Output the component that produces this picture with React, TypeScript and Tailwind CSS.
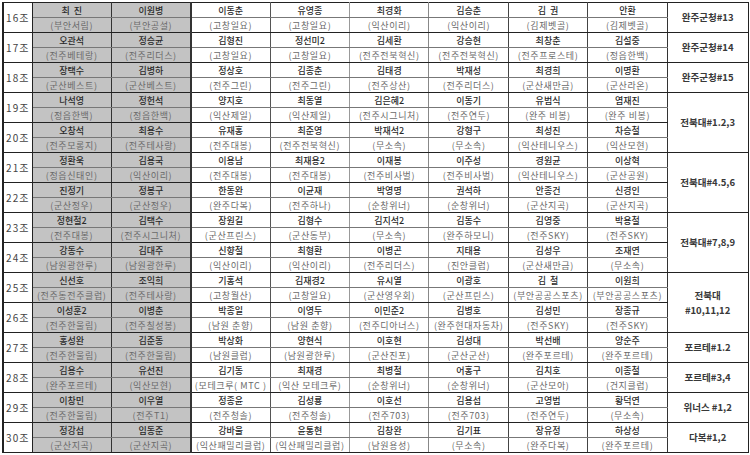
import React from "react";

type Player = [string, string];

interface Jo {
  no: number;
  players: Player[];
}

interface Group {
  start: number;
  span: number;
  label: React.ReactNode;
}

const jos: Jo[] = [
  { no: 16, players: [["최  진", "부안서림"], ["이원병", "부안공설"], ["이동춘", "고창일요"], ["유영종", "고창일요"], ["최경화", "익산이리"], ["김승춘", "익산이리"], ["김  권", "김제벳골"], ["안환", "김제벳골"]] },
  { no: 17, players: [["오관석", "전주베테랑"], ["정승균", "전주리더스"], ["김형진", "고창일요"], ["정선미2", "고창일요"], ["김세환", "전주전북혁신"], ["강승현", "전주전북혁신"], ["최창춘", "전주프로스테"], ["김설중", "정읍한백"]] },
  { no: 18, players: [["장택수", "군산베스트"], ["김병하", "군산베스트"], ["정상호", "전주그린"], ["김종춘", "전주그린"], ["김태경", "전주상산"], ["박재성", "전주리더스"], ["최경희", "군산새만금"], ["이명환", "군산라온"]] },
  { no: 19, players: [["나석영", "정읍한백"], ["정헌석", "정읍한백"], ["양지호", "익산제일"], ["최동열", "익산제일"], ["김은혜2", "전주시그니처"], ["이동기", "전주연두"], ["유범식", "완주 비봉"], ["염재진", "완주 비봉"]] },
  { no: 20, players: [["오창석", "전주모롱지"], ["최용수", "전주테사랑"], ["유재홍", "전주대봉"], ["최준영", "전주전북혁신"], ["박재석2", "무소속"], ["강형구", "무소속"], ["최성진", "익산테니우스"], ["차승철", "익산모현"]] },
  { no: 21, players: [["정환욱", "정읍신태인"], ["김용국", "익산이리"], ["이용남", "전주대봉"], ["최재용2", "전주대봉"], ["이재봉", "전주비사벌"], ["이주성", "전주비사벌"], ["경원균", "익산테니우스"], ["이상혁", "군산공원"]] },
  { no: 22, players: [["진정기", "군산정우"], ["정봉구", "군산정우"], ["한동완", "완주다복"], ["이균재", "전주하나"], ["박영명", "순창위너"], ["권석하", "순창위너"], ["안종건", "군산지곡"], ["신경인", "군산지곡"]] },
  { no: 23, players: [["정현철2", "전주대봉"], ["김택수", "전주시그니처"], ["장원길", "군산프린스"], ["김형수", "군산동부"], ["김지석2", "무소속"], ["김동수", "완주하모니"], ["김영중", "전주SKY"], ["박용철", "전주SKY"]] },
  { no: 24, players: [["강동수", "남원광한루"], ["김대주", "남원광한루"], ["신향철", "익산이리"], ["최형환", "익산이리"], ["이병곤", "전주리더스"], ["지태용", "진안클럽"], ["김성우", "군산새만금"], ["조재연", "무소속"]] },
  { no: 25, players: [["신선호", "전주동전주클럽"], ["조익희", "전주테사랑"], ["기홍석", "고창월산"], ["김재경2", "고창일요"], ["유시열", "군산영우회"], ["이광호", "군산프린스"], ["김  철", "부안공공스포츠"], ["이원희", "부안공공스포츠"]] },
  { no: 26, players: [["이성훈2", "전주한울림"], ["이병춘", "전주칠성봉"], ["박종일", "남원 춘향"], ["이영두", "남원 춘향"], ["이민준2", "전주디아너스"], ["김병호", "완주현대자동차"], ["김성민", "전주SKY"], ["장종규", "전주SKY"]] },
  { no: 27, players: [["홍성완", "전주한울림"], ["김준동", "전주한울림"], ["박상화", "남원클럽"], ["양현식", "남원광한루"], ["이호현", "군산진포"], ["김성대", "군산군산"], ["박선배", "완주포르테"], ["양순주", "완주포르테"]] },
  { no: 28, players: [["김용수", "완주포르테"], ["유선진", "익산모현"], ["김기동", "모테크루( MTC "], ["최재경", "익산 모테크루"], ["최병철", "순창위너"], ["어홍구", "순창위너"], ["김치호", "군산모아"], ["이종철", "건지클럽"]] },
  { no: 29, players: [["이창민", "전주한울림"], ["이우열", "전주T1"], ["정종윤", "전주청솔"], ["김성룡", "전주청솔"], ["이호선", "전주703"], ["김용섭", "전주703"], ["고영범", "전주연두"], ["황덕연", "무소속"]] },
  { no: 30, players: [["정강섭", "군산지곡"], ["임동준", "군산지곡"], ["강바울", "익산패밀리클럽"], ["윤통현", "익산패밀리클럽"], ["김창완", "남원용성"], ["김기표", "무소속"], ["장유정", "완주다복"], ["하상성", "완주포르테"]] },
];

const groups: Group[] = [
  { start: 0, span: 1, label: "완주군청#13" },
  { start: 1, span: 1, label: "완주군청#14" },
  { start: 2, span: 1, label: "완주군청#15" },
  { start: 3, span: 2, label: "전북대#1.2,3" },
  { start: 5, span: 2, label: "전북대#4.5,6" },
  { start: 7, span: 2, label: "전북대#7,8,9" },
  { start: 9, span: 2, label: (<>전북대<br />#10,11,12</>) },
  { start: 11, span: 1, label: "포르테#1.2" },
  { start: 12, span: 1, label: "포르테#3,4" },
  { start: 13, span: 1, label: "위너스 #1,2" },
  { start: 14, span: 1, label: "다복#1,2" },
];

// vertical line colour after each player column
const rightLine = [
  "border-r-[#333]",
  "border-r-[#333] border-r-2",
  "border-r-[#555]",
  "border-r-[#999]",
  "border-r-[#888]",
  "border-r-[#444]",
  "border-r-[#444]",
  "border-r-[#333]",
];

//==================================================================================\\

const App: React.FC = () => {
  return (
    <div
      className="w-[750px] h-[455px] overflow-hidden bg-white pt-[2px]"
      style={{ fontFamily: '"Noto Sans CJK KR", "Noto Sans", sans-serif' }}
    >
      <table className="ml-[2px] w-[746px] table-fixed border-collapse border-l-2 border-t border-r border-[#222]">
        <colgroup>
          <col className="w-[29px]" />
          {Array.from({ length: 8 }).map((_, i) => (
            <col key={i} className="w-[79.4px]" />
          ))}
          <col className="w-[81px]" />
        </colgroup>
        <tbody>
          {jos.map((jo, i) => {
            const group = groups.find((g) => g.start === i);
            return (
              <React.Fragment key={jo.no}>
                <tr className="h-[15px]">
                  <td
                    rowSpan={2}
                    className="border-r border-b border-[#222] p-0 text-center text-[10px] leading-none text-[#444] tracking-[1px]"
                  >
                    {jo.no}조
                  </td>
                  {jo.players.map((p, j) => (
                    <td
                      key={j}
                      className={`border-r border-b border-b-[#777] ${rightLine[j]} p-0 text-center text-[9px] font-medium leading-none text-[#2a2a2a] whitespace-pre ${
                        j < 2 ? "bg-[#c3c3c3]" : ""
                      }`}
                    >
                      {p[0]}
                    </td>
                  ))}
                  {group && (
                    <td
                      rowSpan={group.span * 2}
                      className="border-b border-[#222] p-0 text-center text-[9.5px] leading-[15px] font-bold text-[#383838]"
                    >
                      {group.label}
                    </td>
                  )}
                </tr>
                <tr className="h-[15px]">
                  {jo.players.map((p, j) => (
                    <td
                      key={j}
                      className={`border-r border-b border-b-[#222] ${rightLine[j]} p-0 text-center text-[9px] leading-none text-[#6a6a6a] tracking-[0.6px] whitespace-pre ${
                        j < 2 ? "bg-[#c3c3c3]" : ""
                      }`}
                    >
                      ({p[1]})
                    </td>
                  ))}
                </tr>
              </React.Fragment>
            );
          })}
        </tbody>
      </table>
    </div>
  );
};

export default App;
